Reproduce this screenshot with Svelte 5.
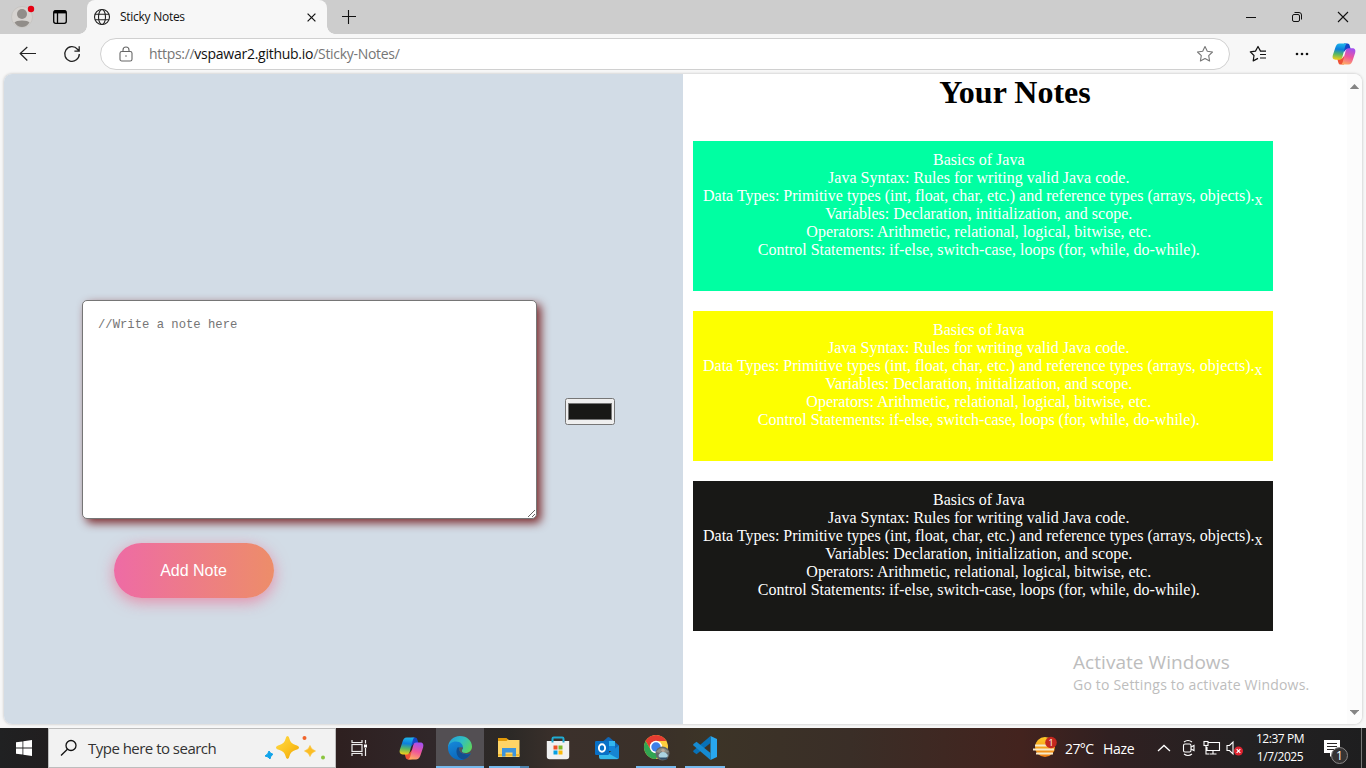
<script>
  const lines = [
    'Basics of Java',
    'Java Syntax: Rules for writing valid Java code.',
    'Data Types: Primitive types (int, float, char, etc.) and reference types (arrays, objects).',
    'Variables: Declaration, initialization, and scope.',
    'Operators: Arithmetic, relational, logical, bitwise, etc.',
    'Control Statements: if-else, switch-case, loops (for, while, do-while).'
  ];
  const notes = ['#00ffa2', '#fdff00', '#181816'];
</script>

{#snippet copilot(size, id)}
  <svg width={size} height={size} viewBox="0 0 24 24">
    <defs>
      <linearGradient id="{id}a" x1=".4" y1="0" x2=".3" y2="1">
        <stop offset="0" stop-color="#1fb4ea" /><stop offset=".35" stop-color="#0c7fdc" />
        <stop offset=".65" stop-color="#57b765" /><stop offset="1" stop-color="#f4cf18" />
      </linearGradient>
      <linearGradient id="{id}b" x1=".6" y1="0" x2=".3" y2="1">
        <stop offset="0" stop-color="#a550ee" /><stop offset=".5" stop-color="#ee559b" />
        <stop offset="1" stop-color="#ffac62" />
      </linearGradient>
    </defs>
    <path d="M12 1.500h3.500c1.200 0 1.800.8 2.100 1.800l1.200 4.200H14l-2.500 3z" fill="#1745c7" />
    <path d="M12 22.500H8.500c-1.200 0-1.800-.8-2.100-1.800L5.200 16.500H10l2.500-3z" fill="#ee5236" />
    <path d="M15.500 1.500h-8C5 1.500 4 3.500 3.200 6L.9 13c-.9 2.800.2 4.700 2.700 4.700H7.500c1.700 0 2.400-1.200 2.900-2.800L13 5c.6-2 1-3.500 2.500-3.500z" fill="url(#{id}a)" />
    <path d="M8.500 22.500h8c2.500 0 3.500-2 4.300-4.500l2.300-7c.9-2.800-.2-4.700-2.700-4.700h-3.900c-1.700 0-2.400 1.200-2.900 2.800L11 19c-.6 2-1 3.500-2.500 3.500z" fill="url(#{id}b)" />
  </svg>
{/snippet}

<div class="screen">
  <div class="tabs">
    <div class="profile">
      <svg width="26" height="28" viewBox="0 0 26 28">
        <circle cx="11" cy="16" r="10.500" fill="#d6d3d0" stroke="#c0bdba" stroke-width=".6" />
        <circle cx="11" cy="13" r="5" fill="#918d89" />
        <path d="M3.500 21.500Q5 19.500 11 19.500t7.500 2q-3 4.500-7.500 4.500t-7.500-4.500z" fill="#918d89" />
        <circle cx="20" cy="8" r="3.200" fill="#e60012" />
      </svg>
    </div>
    <div class="workspace">
      <svg width="16" height="16" viewBox="0 0 16 16" fill="none" stroke="#000" stroke-width="1.300">
        <rect x="1.700" y="1.700" width="12.600" height="12.600" rx="2" /><path d="M2 3h12" stroke-width="2.800" /><path d="M5.500 4v10" />
      </svg>
    </div>
    <div class="tab">
      <svg width="18" height="18" viewBox="0 0 18 18" fill="none" stroke="#222" stroke-width="1.100">
        <circle cx="9" cy="9" r="7.500" /><ellipse cx="9" cy="9" rx="3.500" ry="7.500" /><path d="M2 6.300h14M2 11.700h14" />
      </svg>
      <span class="tabtitle">Sticky Notes</span>
      <svg width="9" height="9" viewBox="0 0 9 9" stroke="#111" stroke-width="1.200"><path d="M.6.6l7.800 7.800M8.400.6L.6 8.400" /></svg>
    </div>
    <svg class="plus" width="14" height="14" viewBox="0 0 14 14" stroke="#111" stroke-width="1.100"><path d="M6.500 0v14M0 6.500h14" /></svg>
    <div class="window">
      <svg width="12" height="12" viewBox="0 0 12 12" stroke="#111"><path d="M1 6.500h10" /></svg>
      <svg width="12" height="12" viewBox="0 0 12 12" fill="none" stroke="#111"><rect x="1.500" y="3.500" width="7" height="7" rx="1.500" /><path d="M3.500 1.500H8q2.500 0 2.500 2.500v4.500" /></svg>
      <svg width="12" height="12" viewBox="0 0 12 12" stroke="#111" stroke-width="1.100"><path d="M1 1l10 10M11 1L1 11" /></svg>
    </div>
  </div>

  <div class="toolbar">
    <svg class="back" width="18" height="16" viewBox="0 0 18 16" fill="none" stroke="#222" stroke-width="1.200"><path d="M8.300 1L1.200 7.500l7.100 7M1.200 7.500H17" /></svg>
    <svg class="reload" width="18" height="18" viewBox="0 0 18 18" fill="none" stroke="#222" stroke-width="1.300"><path d="M16.300 9A7.300 7.300 0 1 1 14.500 4.200L16 5.800M16.200 1.200v4.900h-4.800" /></svg>
    <div class="address">
      <svg width="14" height="16" viewBox="0 0 14 16" fill="none" stroke="#666" stroke-width="1.100"><rect x="1" y="5.500" width="12" height="9.500" rx="1.800" /><path d="M4 5.500V4q0-3 3-3t3 3v1.500" /><circle cx="7" cy="10" r=".8" fill="#666" stroke="none" /></svg>
      <span class="url">https://<b>vspawar2.github.io</b>/Sticky-Notes/</span>
      <svg class="star" width="18" height="18" viewBox="0 0 18 18" fill="none" stroke="#777" stroke-width="1.100" stroke-linejoin="round"><path d="M9 1.500l2.300 4.800 5.200.7-3.800 3.700.9 5.300L9 13.500 4.400 16l.9-5.300L1.500 7l5.200-.7z" /></svg>
    </div>
    <svg class="fav" width="18" height="18" viewBox="0 0 18 18" fill="none" stroke="#111" stroke-width="1.200" stroke-linejoin="round"><path d="M11.500 6.100L9 1.500 6.500 6.100l-5.200.7L5 10.500l-.8 5.400 4.800-2.500M11 9.500h6M11 13h6M11 6.200h6" /></svg>
    <svg class="dots" width="14" height="4" viewBox="0 0 14 4" fill="#111"><circle cx="2" cy="2" r="1.300" /><circle cx="7" cy="2" r="1.300" /><circle cx="12" cy="2" r="1.300" /></svg>
    {@render copilot(24, 'top')}
  </div>

  <div class="page">
    <div class="editor">
      <div class="inputs">
        <textarea placeholder="//Write a note here"></textarea>
        <input type="color" value="#181816" />
      </div>
      <button>Add Note</button>
    </div>
    <div class="notes">
      <h1>Your Notes</h1>
      {#each notes as color}
        <div class="note" style="background:{color}">
          <div class="text">{#each lines as line}<div>{line}</div>{/each}</div>
          <span class="remove">x</span>
        </div>
      {/each}
    </div>
    <div class="scroll">
      <svg width="9" height="6" viewBox="0 0 9 6" fill="#858585"><path d="M4.500 0L9.200 5H-.2z" /></svg>
      <svg width="9" height="6" viewBox="0 0 9 6" fill="#858585"><path d="M4.500 6L9.200 1H-.2z" /></svg>
    </div>
  </div>

  <div class="taskbar">
    <div class="start">
      <svg width="16" height="16" viewBox="0 0 16 16" fill="#fff"><path d="M0 2.300l6.500-.9v6.100H0zM7.300 1.300L16 0v7.500H7.300zM0 8.400h6.500v6.200L0 13.700zM7.300 8.400H16V16l-8.700-1.300z" /></svg>
    </div>
    <div class="search">
      <svg width="18" height="18" viewBox="0 0 18 18" fill="none" stroke="#111" stroke-width="1.300"><circle cx="11" cy="6.500" r="5" /><path d="M7.400 10.200L1 16.500" /></svg>
      <span>Type here to search</span>
      <svg class="sparkles" width="64" height="28" viewBox="0 0 64 28">
        <defs><linearGradient id="gold" x1="0" y1="0" x2="1" y2="1"><stop offset="0" stop-color="#ffdc4a" /><stop offset=".55" stop-color="#fbc21f" /><stop offset="1" stop-color="#eaa10a" /></linearGradient></defs>
        <path d="M24.500 2q1.500 0 2 3 1 4.500 6 6 3.500 1 3.500 2.500t-3.500 2.500q-5 1.500-6 6-.5 3-2 3t-2-3q-1-4.500-6-6-3.500-1-3.500-2.500t3.500-2.500q5-1.500 6-6 .5-3 2-3z" fill="url(#gold)" />
        <path d="M47 11.500q1 4 5.500 5.500-4.500 1.500-5.500 5.500-1-4-5.500-5.500 4.500-1.500 5.500-5.500z" fill="#fbbd24" stroke="#fbbd24" stroke-width=".6" />
        <path d="M6 17q.8 2.300 4 3.300-2.500 1-3 4.700-1.500-2.500-5-3 3.500-2 4-5z" fill="#12a4ea" stroke="#12a4ea" />
        <circle cx="41.500" cy="4" r="2" fill="#f0642b" /><circle cx="60" cy="23.500" r="2" fill="#8ac43e" />
      </svg>
    </div>
    <div class="taskview">
      <svg width="18" height="16" viewBox="0 0 18 16" fill="none" stroke="#eee" stroke-width="1.200"><path d="M1 0v2.500h10V0M1 16v-2.500h10V16M14.500 0v3.500M14.500 8v8" /><rect x="1" y="4.500" width="10" height="7" /><rect x="13" y="4.500" width="3" height="3" fill="#fff" stroke="none" /></svg>
    </div>
    <div class="apps">
      <div class="app">{@render copilot(25, 'task')}</div>
      <div class="app active">
        <svg width="26" height="26" viewBox="0 0 26 26">
          <defs>
            <linearGradient id="eg" x1="0" y1=".2" x2="1" y2=".7"><stop offset="0" stop-color="#239ed9" /><stop offset=".5" stop-color="#30bfc3" /><stop offset="1" stop-color="#5ed65a" /></linearGradient>
            <linearGradient id="eb" x1="0" y1="0" x2=".5" y2="1"><stop offset="0" stop-color="#1689da" /><stop offset="1" stop-color="#0b66ba" /></linearGradient>
          </defs>
          <path d="M1 13C1 6 6 1 13 1s12 5 12 10.500c0 4-3 6.500-6.500 6.500-2.500 0-4-1-4-2.300 0-1 1-1.500 1-3.200L5 9z" fill="url(#eg)" />
          <path d="M1 13c0-4 4-6.500 8-6.500 4.500 0 7 3 7 6 0 1.500-1.200 2-1.200 3.500 0 2 3 3 5 3 2 0 3.300-.6 4-.6C21.500 22.500 17.500 25 13 25 6.400 25 1 19.600 1 13z" fill="url(#eb)" />
          <path d="M10.500 12.500c-2.700 4.500 0 11.500 6 12 3-.9 5.400-2.800 7.300-6-2 .8-4 1.200-6.300.6-4-.9-6-3.300-5-6.800z" fill="#124f91" />
          <path d="M12.500 12.300c-1 3.500 1 5.900 5 6.800-1.900-.9-2.700-2.200-2.700-3.300 0-1.300 1.200-1.800 1.200-3.300z" fill="#57545a" />
        </svg>
      </div>
      <div class="app open grouped">
        <svg width="24" height="22" viewBox="0 0 24 22"><path d="M1 2h9l2 1h10.500v17H1z" fill="#ffd466" /><path d="M1 1h8.500l1.500 1.500L9.500 4H1z" fill="#e29a09" /><path d="M1 17h21.500v2H1z" fill="#f0b72e" /><path d="M5 11h14v8.500h-3.500v-4h-7v4H5z" fill="#3d94dc" /></svg>
      </div>
      <div class="app">
        <svg width="24" height="24" viewBox="0 0 24 24"><path d="M6.500 6V2.800Q6.500 1.500 7.800 1.500h8.400q1.300 0 1.300 1.300V6" fill="none" stroke="#20acd3" stroke-width="2" /><path d="M.8 5h22.400v15.500q0 2.800-2.800 2.800H3.600Q.8 23.300.8 20.500z" fill="#f1f1f1" /><path d="M6.500 5v1.500M17.500 5v1.500" stroke="#20acd3" stroke-width="2" /><path fill="#f05125" d="M7.500 9.500h4v4h-4z" /><path fill="#7eb928" d="M12.500 9.500h4v4h-4z" /><path fill="#05a0e3" d="M7.500 14.500h4v4h-4z" /><path fill="#fbb90a" d="M12.500 14.500h4v4h-4z" /></svg>
      </div>
      <div class="app">
        <svg width="26" height="24" viewBox="0 0 26 24"><path d="M4 9.500L13.500 1.500q1-.8 2 0L25 9.500v3H4z" fill="#1066b5" /><path d="M9 5h12v10H9z" fill="#1484d8" /><path d="M15 5h6v5h-6z" fill="#32b6ef" /><path d="M25 9.500v12q0 1.800-1.800 1.800H6L25 9.500z" fill="#1685d2" /><path d="M5 12l19.500 11H6.500Q5 23 5 21z" fill="#35b9eb" /><rect x="1" y="5" width="14" height="14" rx="1.200" fill="#0870c6" /><ellipse cx="8" cy="12" rx="3.100" ry="3.700" fill="none" stroke="#fff" stroke-width="1.900" /></svg>
      </div>
      <div class="app open">
        <svg class="chrome" width="28" height="28" viewBox="0 0 28 28"><circle cx="13" cy="13" r="12" fill="#ffcf3e" /><path d="M2.600 7A12 12 0 0 1 23.400 7H13L7.800 16z" fill="#e53c31" /><path d="M2.600 7A12 12 0 0 0 13 25l5.200-9H7.800z" fill="#31a552" /><circle cx="13" cy="13" r="6.200" fill="#fff" /><circle cx="13" cy="13" r="4.700" fill="#3f80e8" /><circle cx="19.500" cy="19.500" r="7" fill="#65696b" /><path d="M13 18q6-8 13 0l-4 1-3-3-2 3z" fill="#8d8f85" /><circle cx="20" cy="16.500" r="1.800" fill="#b8a595" /><path d="M15.500 22q1-4 4.500-4t5 4l-2 2h-6z" fill="#abd4e1" /><path d="M16 23.500h8v2h-6z" fill="#304f69" /></svg>
      </div>
      <div class="app open">
        <svg width="26" height="26" viewBox="0 0 26 26"><path d="M18.500 1L25 4v18l-6.500 3z" fill="#28a7ef" /><path d="M18.500 1v7L4.500 19.200 1.500 17q-.8-.7 0-1.500z" fill="#0871b7" /><path d="M18.500 25v-7L4.500 6.800 1.500 9q-.8.700 0 1.500z" fill="#168bd2" /></svg>
      </div>
    </div>
    <div class="weather">
      <svg width="26" height="24" viewBox="0 0 26 24"><defs><linearGradient id="sun" x1="0" y1="0" x2="0" y2="1"><stop offset="0" stop-color="#ffca28" /><stop offset="1" stop-color="#ef7d13" /></linearGradient></defs><circle cx="12" cy="11" r="10" fill="url(#sun)" /><path d="M2 9.500h13M0 13.500h21M3 17.500h17" stroke="#f6e9c7" stroke-width="1.800" /><circle cx="18" cy="6.500" r="5.800" fill="#c4281f" /><text x="18" y="10" text-anchor="middle" font-size="9" fill="#fff">1</text></svg>
      <span class="temp">27°C</span><span class="haze">Haze</span>
    </div>
    <div class="tray">
      <svg width="14" height="8" viewBox="0 0 14 8" fill="none" stroke="#fff" stroke-width="1.300"><path d="M1 7l6-5.500L13 7" /></svg>
      <svg class="meet" width="14" height="18" viewBox="0 0 14 18" fill="none" stroke="#fff" stroke-width="1.100"><rect x="1.500" y="5" width="7.500" height="8" rx="1.500" /><path d="M9 8l3-1.500v5L9 10M2 3q4-3 8 0M2 15q4 3 8 0" /></svg>
      <svg class="net" width="18" height="16" viewBox="0 0 18 16" fill="none" stroke="#fff" stroke-width="1.100"><path d="M5 2.500h11.500v8H4V7M10 10.500V14M6.500 14h7M3 6v8h3" /><rect x="1" y="1.500" width="4" height="4" /></svg>
      <svg class="sound" width="18" height="16" viewBox="0 0 18 16"><path d="M1 5.500h2.500L7 2v12l-3.500-3.500H1z" fill="none" stroke="#fff" stroke-width="1.100" /><circle cx="12.500" cy="11" r="4.500" fill="#df2430" /><path d="M10.700 9.200l3.600 3.600m0-3.600l-3.600 3.600" stroke="#fff" stroke-width="1.200" /></svg>
    </div>
    <div class="clock"><span class="time">12:37 PM</span><span class="date">1/7/2025</span></div>
    <div class="action">
      <svg width="26" height="26" viewBox="0 0 26 26"><path d="M1 1h16v13h-6l-4 4v-4H1z" fill="#fff" /><path d="M4 4.500h10M4 7.500h10M4 10.500h7" stroke="#292525" /><circle cx="16.500" cy="16.500" r="8" fill="#353333" stroke="#898787" /><text x="16.500" y="21" text-anchor="middle" font-size="12" fill="#fff">1</text></svg>
    </div>
  </div>

  <div class="activate"><div>Activate Windows</div><p>Go to Settings to activate Windows.</p></div>
</div>

<style>
  :global(body) { margin: 0; overflow: hidden; }
  * { box-sizing: border-box; }
  svg { display: block; flex: none; }
  .screen { width: 1366px; height: 768px; display: flex; flex-direction: column; position: relative; background: #f7f7f7; font-family: 'Open Sans', sans-serif; overflow: hidden; white-space: nowrap; }
  .tabs { height: 34px; display: flex; align-items: center; background: #cdcdcd; flex: none; }
  .profile { width: 52px; height: 34px; padding: 1px 0 0 11px; }
  .workspace { width: 35px; }
  .tab { width: 240px; height: 34px; display: flex; align-items: center; background: #f7f7f7; border-radius: 8px 8px 0 0; padding: 0 11px 0 6px; position: relative; }
  .tab::before, .tab::after { content: ''; position: absolute; bottom: 0; width: 8px; height: 8px; }
  .tab::before { left: -8px; background: radial-gradient(circle at 0 0, #cdcdcd 7.500px, #f7f7f7 8px); }
  .tab::after { right: -8px; background: radial-gradient(circle at 100% 0, #cdcdcd 7.500px, #f7f7f7 8px); }
  .tabtitle { margin: -1px 0 0 9px; font-size: 12px; letter-spacing: -.27px; flex: 1; color: #111; }
  .plus { margin-left: 15px; }
  .window { margin-left: auto; display: flex; gap: 34px; padding-right: 17px; }
  .toolbar { height: 40px; display: flex; align-items: center; flex: none; }
  .back { margin-left: 19px; }
  .reload { margin-left: 26px; }
  .address { width: 1130px; height: 32px; margin-left: 19px; border: 1px solid #d0d0d0; border-radius: 16px; background: #fff; display: flex; align-items: center; padding: 0 15px 0 18px; }
  .url { margin: -1px 0 0 16px; font-size: 14px; letter-spacing: -.3px; color: #767676; flex: 1; }
  .url b { color: #111; font-weight: 400; letter-spacing: -.26px; }
  .fav { margin-left: 19px; }
  .dots { margin: 0 23px 0 28px; }
  .page { height: 650px; margin: 0 4px 4px; display: flex; flex: none; border-radius: 8px; overflow: hidden; background: #fff; box-shadow: 0 0 3px rgba(0,0,0,.25); }
  .editor { width: 679px; background: #d2dce6; padding: 226px 0 0 78px; }
  .inputs { display: flex; align-items: center; gap: 28px; }
  textarea { display: block; width: 455px; height: 219px; margin: 0; padding: 17px 15px 15px; border: 1px solid #767676; border-radius: 5px; background: #fff; box-shadow: 4px 4px 10px #7d2c2e; font: 12.220px 'Liberation Mono', monospace; }
  textarea::placeholder { color: #757575; }
  input { width: 50px; height: 27px; margin: 4px 0 0; padding: 1px 2px; }
  input::-webkit-color-swatch-wrapper { padding: 3px 0; }
  button { display: block; margin: 24px 0 0 32px; width: 160px; height: 55px; padding: 0 1px 0 0; border: 0; border-radius: 50px; color: #fff; font: 16px 'Liberation Sans', Arial, sans-serif; background: linear-gradient(to right, #ee6ba5, #ed8d69); box-shadow: 0 4px 15px rgba(236,116,149,.75); }
  .notes { width: 664px; font-family: 'Liberation Serif', 'Times New Roman', serif; }
  h1 { margin: 0; font-size: 32px; line-height: 37px; height: 67px; text-align: center; color: #000; }
  .note { width: 580px; height: 150px; margin: 0 0 20px 10px; padding: 10px; display: flex; color: #fff; font-size: 16px; line-height: 18px; text-align: center; }
  .text { width: 551.500px; }
  .remove { margin-top: 40px; }
  .scroll { width: 15px; background: #fcfcfc; display: flex; flex-direction: column; justify-content: space-between; align-items: center; padding: 10px 0 9px; }
  .taskbar { height: 40px; display: flex; align-items: center; flex: none; color: #fff; background: linear-gradient(to right, #202122 0, #211e1f 48px, #2e2020 340px, #31272a 430px, #2c2926 510px, #3b302b 560px, #3a3029 650px, #3c3427 710px, #3a2e27 850px, #43231e 1020px, #302021 1110px, #232122 1250px, #1e1e1f); }
  .start { width: 48px; padding-left: 16px; }
  .search { width: 288px; height: 40px; background: #f2f2f2; border: 1px solid #bdbdbd; display: flex; align-items: center; color: #333; padding-left: 11px; }
  .search span { margin-left: 10px; font-size: 15px; letter-spacing: -.52px; flex: 1; }
  .sparkles { margin-right: 8px; }
  .taskview { width: 51px; padding-left: 15px; }
  .apps { display: flex; gap: 1px; height: 40px; }
  .app { width: 48px; height: 40px; display: flex; align-items: center; justify-content: center; }
  .chrome { margin-left: 2px; }
  .active { background: #534f53; box-shadow: inset 0 -2px #76b9ed; }
  .open { background: linear-gradient(#76b9ed, #76b9ed) center bottom / 40px 2px no-repeat; }
  .grouped { background: linear-gradient(to right, #76b9ed 31px, #4d83ad 31px) center bottom / 40px 2px no-repeat; }
  .weather { margin-left: auto; display: flex; align-items: center; font-size: 14px; }
  .temp { margin-left: 6px; width: 38px; letter-spacing: -.6px; }
  .haze { width: 54px; letter-spacing: -.3px; }
  .tray { display: flex; align-items: center; width: 95px; }
  .meet { margin-left: 11px; }
  .net { margin-left: 7px; }
  .sound { margin-left: 5px; }
  .clock { width: 56px; display: flex; flex-direction: column; align-items: center; font-size: 12px; line-height: 18px; letter-spacing: -.45px; }
  .action { width: 54px; height: 40px; padding: 11px 0 0 15px; margin-right: 4px; border-right: 1px solid #777; }
  .activate { position: absolute; left: 1073px; top: 649px; color: #bdbdbd; font-size: 19px; line-height: 26px; letter-spacing: .05px; }
  .activate p { margin: 0; font-size: 14px; line-height: 20px; letter-spacing: .2px; }
</style>
